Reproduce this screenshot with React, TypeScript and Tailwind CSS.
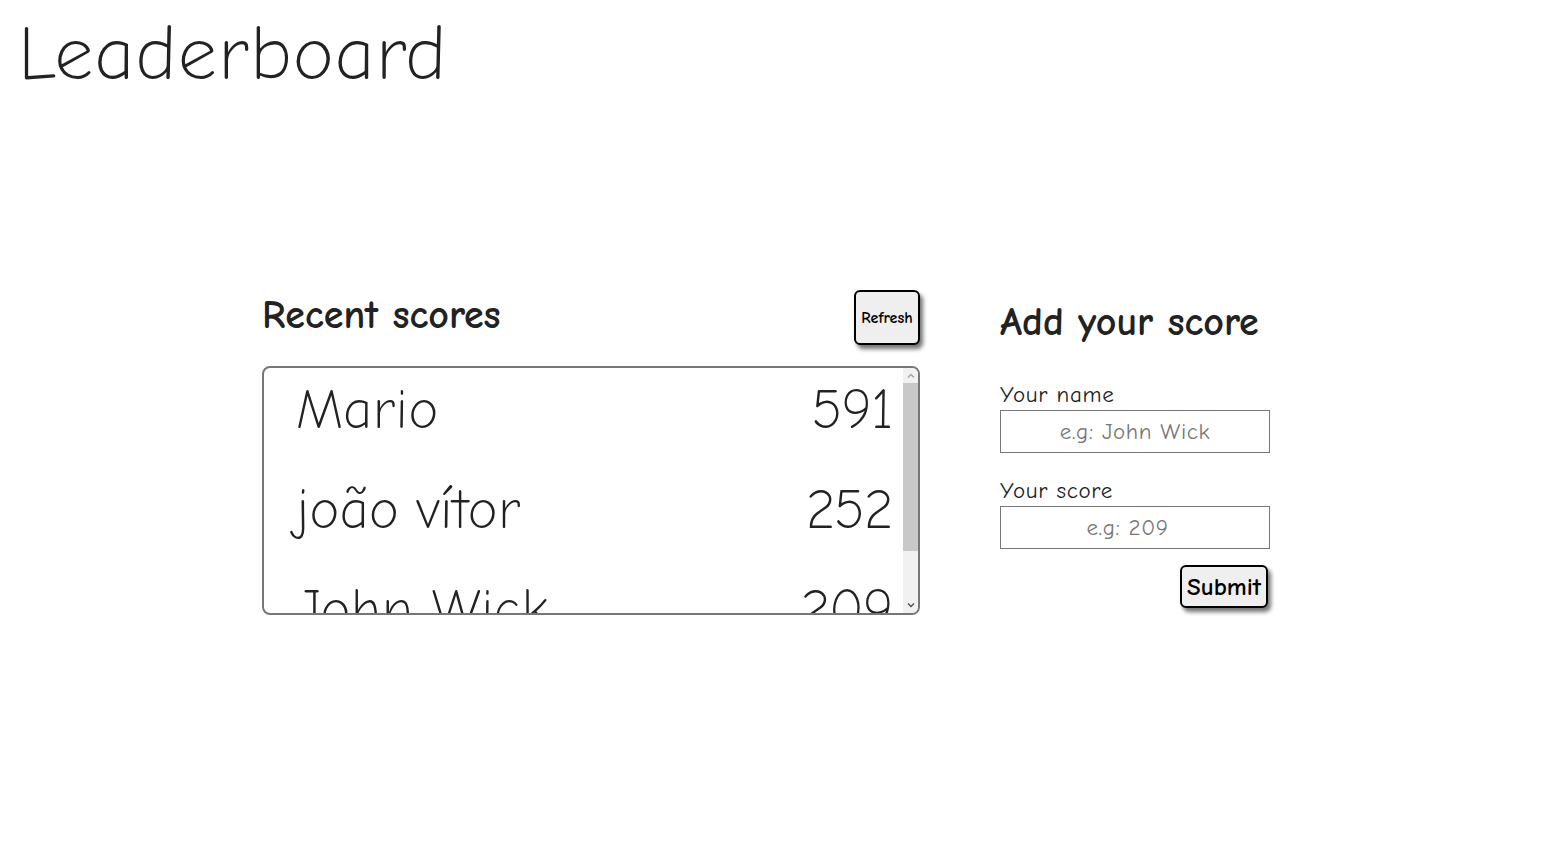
import React from "react";

const scores = [
  { name: "Mario", score: 591 },
  { name: "joão vítor", score: 252 },
  { name: "John Wick", score: 209 },
  { name: "Luigi", score: 150 },
];

const bold = { fontFamily: '"Comic Neue", "Comic Sans MS", sans-serif', fontWeight: 700 };

export default function App() {
  const thin = { fontFamily: '"Comic Neue", Lato, "Open Sans", sans-serif' };
  return (
    <div className="min-h-[850px] w-full bg-white text-[#222]" style={thin}>
      <h1 className="pl-[17px] pt-[8px] text-[77px] font-light leading-[92px] tracking-[0.5px]">Leaderboard</h1>
      <div className="mt-[190px] flex items-start pl-[262px]">
        <section className="w-[658px]">
          <div className="flex items-start justify-between">
            <h2 className="mt-[2px] text-[40px] leading-[46px]" style={bold}>Recent scores</h2>
            <button className="h-[55px] w-[66px] rounded-[6px] border-2 border-black bg-[#efefef] text-[16px] text-black shadow-[3px_4px_4px_rgba(0,0,0,0.55)]" style={bold}>Refresh</button>
          </div>
          <div className="mt-[21px] flex h-[249px] overflow-hidden rounded-[8px] border-2 border-[#777]">
            <div className="flex-1 overflow-hidden pl-[32px] pr-[10px]">
              {scores.map((s) => (
                <div key={s.name} className="flex h-[100px] items-start justify-between text-[56px] font-light leading-[84px]">
                  <span>{s.name}</span>
                  <span>{s.score}</span>
                </div>
              ))}
            </div>
            <div className="flex w-[15px] flex-col bg-[#f1f1f1]">
              <div className="flex h-[15px] items-center justify-center">
                <svg width="8" height="5" viewBox="0 0 8 5"><path d="M1 4.5 L4 1.5 L7 4.5" fill="none" stroke="#a3a3a3" strokeWidth="1.4" /></svg>
              </div>
              <div className="h-[168px] bg-[#c8c8c8]" />
              <div className="flex-1" />
              <div className="flex h-[15px] items-center justify-center">
                <svg width="8" height="5" viewBox="0 0 8 5"><path d="M1 0.5 L4 3.5 L7 0.5" fill="none" stroke="#505050" strokeWidth="1.4" /></svg>
              </div>
            </div>
          </div>
        </section>
        <section className="ml-[80px] w-[270px] pt-[10px]">
          <h2 className="text-[40px] leading-[44px]" style={bold}>Add your score</h2>
          <label className="mt-[36px] block text-[23px] leading-[30px] tracking-[0.7px]">Your name</label>
          <input className="h-[43px] w-[270px] border border-[#777] text-center text-[23px] tracking-[0.6px] outline-none placeholder:text-[#777]" placeholder="e.g: John Wick" />
          <label className="mt-[23px] block text-[23px] leading-[30px] tracking-[0.7px]">Your score</label>
          <input type="number" className="h-[43px] w-[270px] border border-[#777] text-center text-[23px] tracking-[0.6px] outline-none placeholder:text-[#777]" placeholder="e.g: 209" />
          <div className="mt-[16px] flex justify-end pr-[2px]">
            <button className="h-[43px] w-[88px] rounded-[6px] border-2 border-black bg-[#efefef] text-[25px] text-black shadow-[3px_4px_4px_rgba(0,0,0,0.55)]" style={bold}>Submit</button>
          </div>
        </section>
      </div>
    </div>
  );
}
